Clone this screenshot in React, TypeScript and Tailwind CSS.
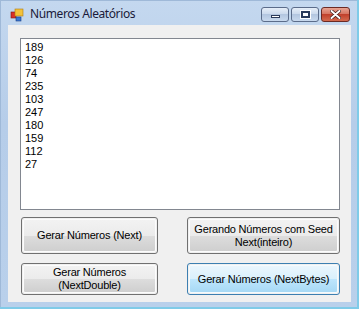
import React from "react";

const font = { fontFamily: '"Liberation Sans", Arial, sans-serif' };

function Btn({
  children,
  w,
  h,
  hot,
}: {
  children: React.ReactNode;
  w: string;
  h: string;
  hot?: boolean;
}) {
  return (
    <div
      className={`${w} ${h} rounded-[3px] border ${
        hot ? "border-[#3c7fb1]" : "border-[#707070]"
      } p-px`}
    >
      <div
        className={`w-full h-full rounded-[2px] flex items-center justify-center text-center text-[11px] leading-[13px] tracking-[-0.2px] text-black ${
          hot
            ? "bg-[linear-gradient(to_bottom,#eaf6fd_0%,#d9f0fc_50%,#bee6fd_50%,#a7d9f5_100%)] border border-[#f4fbfe]"
            : "bg-[linear-gradient(to_bottom,#f2f2f2_0%,#ebebeb_50%,#dddddd_50%,#cfcfcf_100%)] border border-[#fcfcfc]"
        }`}
        style={font}
      >
        {children}
      </div>
    </div>
  );
}

export default function App() {
  const nums = ["189", "126", "74", "235", "103", "247", "180", "159", "112", "27"];
  return (
    <div className="w-[359px] h-[309px] bg-[linear-gradient(to_bottom,#c4d8ef,#b6cde9_40%,#b9d0eb)] flex flex-col shadow-[inset_-2px_-2px_0_#7fcbe8,inset_1px_1px_0_#9fb9d8]">
      {/* title bar */}
      <div className="h-[25px] flex items-start pl-[10px] pr-[9px]">
        <svg width="14" height="14" viewBox="0 0 14 14" className="mt-[8px]">
          <rect x="1" y="4" width="5" height="6" fill="#d8302a" stroke="#7a1a16" strokeWidth="0.6" />
          <rect x="5" y="1" width="8" height="7" fill="#f3c23a" stroke="#b07a10" strokeWidth="0.6" />
          <rect x="6" y="9" width="5" height="4" fill="#3a78d4" stroke="#1c3e80" strokeWidth="0.6" />
        </svg>
        <span
          className="ml-[6px] mt-[6px] text-[12px] leading-[16px] tracking-[-0.4px] text-[#1a1a3a]"
          style={{ fontFamily: '"Noto Sans", "Open Sans", sans-serif' }}
        >
          Números Aleatórios
        </span>
        <div className="ml-auto mt-[7px] flex gap-[2px]">
          <div className="w-[28px] h-[15px] rounded-[3px] border border-[#5b6c8a] bg-[linear-gradient(to_bottom,#e6eef8,#c9d8ec_50%,#b3c6e0_50%,#c8d9ee)] flex items-center justify-center">
            <div className="w-[9px] h-[3px] bg-white border border-[#2a3a5a] mt-[4px]" />
          </div>
          <div className="w-[28px] h-[15px] rounded-[3px] border border-[#5b6c8a] bg-[linear-gradient(to_bottom,#e6eef8,#c9d8ec_50%,#b3c6e0_50%,#c8d9ee)] flex items-center justify-center">
            <div className="w-[9px] h-[7px] border-[2px] border-[#2a3a5a] bg-white shadow-[0_0_0_1px_#ffffff]" />
          </div>
          <div className="w-[29px] h-[15px] rounded-[3px] border border-[#6b2a24] bg-[linear-gradient(to_bottom,#e8a493,#d4705c_50%,#c1412c_50%,#d46a4e)] flex items-center justify-center">
            <svg width="11" height="9" viewBox="0 0 11 9">
              <path d="M1.5 1 L9.5 8 M9.5 1 L1.5 8" stroke="#3a1a18" strokeWidth="3.4" strokeLinecap="round" />
              <path d="M1.5 1 L9.5 8 M9.5 1 L1.5 8" stroke="#ffffff" strokeWidth="2" strokeLinecap="round" />
            </svg>
          </div>
        </div>
      </div>
      {/* client area */}
      <div className="ml-[8px] w-[343px] h-[277px] bg-[#f0f0f0] pt-[13px] pl-[12px] flex flex-col">
        <div
          className="w-[320px] h-[172px] border border-[#828790] bg-white pl-[4px] pt-[2px] text-[11px] leading-[13px] text-black"
          style={font}
        >
          {nums.map((n) => (
            <div key={n}>{n}</div>
          ))}
        </div>
        <div className="mt-[7px] ml-[1px] flex flex-col gap-[9px]">
          <div className="flex gap-[29px]">
            <Btn w="w-[137px]" h="h-[37px]">Gerar Números (Next)</Btn>
            <Btn w="w-[153px]" h="h-[37px]">
              Gerando Números com Seed
              <br />
              Next(inteiro)
            </Btn>
          </div>
          <div className="flex gap-[29px]">
            <Btn w="w-[137px]" h="h-[32px]">
              Gerar Números
              <br />
              (NextDouble)
            </Btn>
            <Btn w="w-[153px]" h="h-[32px]" hot>
              Gerar Números (NextBytes)
            </Btn>
          </div>
        </div>
      </div>
    </div>
  );
}
